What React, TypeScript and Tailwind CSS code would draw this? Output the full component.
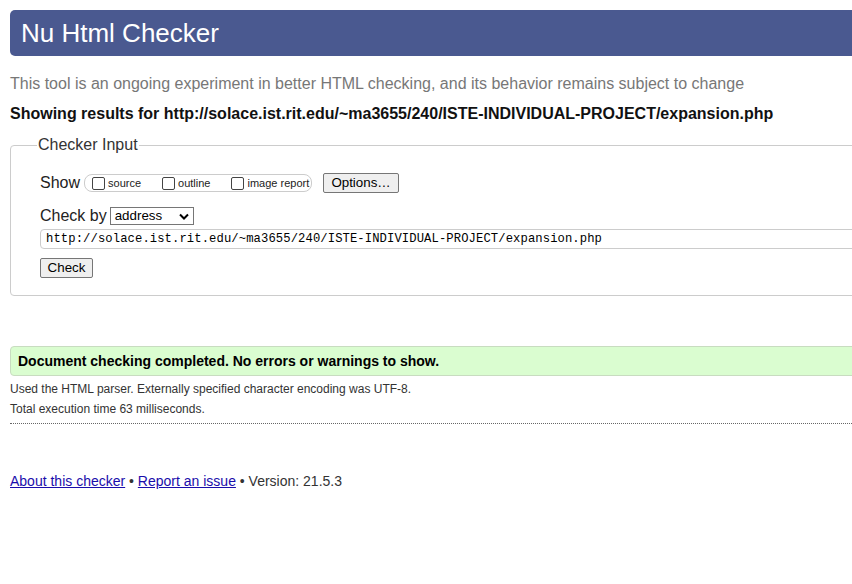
import React from "react";

const url =
  "http://solace.ist.rit.edu/~ma3655/240/ISTE-INDIVIDUAL-PROJECT/expansion.php";

function Box({ label }: { label: string }) {
  return (
    <label className="flex items-center gap-[3px] text-[11px] leading-none text-[#222]">
      <span className="inline-block h-[13px] w-[13px] rounded-[2px] border border-[#444] bg-white" />
      <span>{label}</span>
    </label>
  );
}

function App() {
  return (
    <div className="h-[584px] w-[852px] overflow-hidden bg-white font-['Liberation_Sans',Arial,sans-serif] text-[#222]">
      <div className="w-[1000px] pl-[10px] pt-[10px]">
        <header className="flex h-[46px] items-center rounded-l-[5px] bg-[#4a5990] pl-[11px]">
          <h1 className="text-[26px] leading-none text-white">Nu Html Checker</h1>
        </header>

        <p className="mt-[18px] text-[16px] leading-[20px] text-[#777]">
          This tool is an ongoing experiment in better HTML checking, and its behavior remains subject to change
        </p>
        <p className="mt-[10px] text-[16px] font-bold leading-[20px] text-[#111]">
          Showing results for {url}
        </p>

        <fieldset className="mt-[11px] rounded-[4px] border border-[#ccc] px-[29px] pb-[16px]">
          <legend className="-ml-[3px] px-[1px] text-[16px] leading-[20px] text-[#333]">
            Checker Input
          </legend>

          <div className="mt-[18px] flex h-[20px] items-center">
            <span className="text-[16px] leading-none">Show</span>
            <div className="ml-[4px] flex h-[18px] w-[228px] items-center rounded-[8px] border border-[#ccc] pl-[7px]">
              <Box label="source" />
              <span className="w-[21px]" />
              <Box label="outline" />
              <span className="w-[21px]" />
              <Box label="image report" />
            </div>
            <button className="ml-[11px] h-[20px] w-[76px] rounded-[2px] border border-[#767676] bg-[#efefef] text-[13.33px] leading-none text-black">
              Options…
            </button>
          </div>

          <div className="mt-[13px] flex h-[20px] items-center">
            <span className="text-[16px] leading-none">Check by</span>
            <div className="ml-[3px] flex h-[18px] w-[84px] items-center justify-between border border-[#767676] bg-white pl-[4px] pr-[4px]">
              <span className="text-[13.33px] leading-none text-black">address</span>
              <svg width="10" height="7" viewBox="0 0 10 7">
                <path d="M1 1.5 L5 5.5 L9 1.5" fill="none" stroke="#000" strokeWidth="2" />
              </svg>
            </div>
          </div>

          <div className="mt-[3px] flex h-[20px] items-center rounded-[4px] border border-[#ccc] pl-[5px]">
            <span className="font-['Liberation_Mono',monospace] text-[12.2px] tracking-[0.1px] leading-none text-black">
              {url}
            </span>
          </div>

          <button className="mt-[9px] h-[20px] w-[53px] rounded-[2px] border border-[#767676] bg-[#efefef] text-[13.33px] leading-none text-black">
            Check
          </button>
        </fieldset>

        <div className="mt-[50px] flex h-[30px] items-center rounded-l-[4px] border border-[#c8dcc0] bg-[#dafdd0] pl-[7px]">
          <span className="text-[14px] font-bold leading-none text-black">
            Document checking completed. No errors or warnings to show.
          </span>
        </div>

        <p className="mt-[3px] text-[12px] leading-[20px] text-[#333]">
          Used the HTML parser. Externally specified character encoding was UTF-8.
        </p>
        <p className="text-[12px] leading-[20px] text-[#333]">
          Total execution time 63 milliseconds.
        </p>
        <div className="mt-[4px] border-t border-dotted border-[#666]" />

        <p className="mt-[47px] text-[14px] leading-[20px] text-[#333]">
          <a href="#" className="text-[#1a0dab] underline">About this checker</a> •{" "}
          <a href="#" className="text-[#1a0dab] underline">Report an issue</a> • Version: 21.5.3
        </p>
      </div>
    </div>
  );
}

export default App;
